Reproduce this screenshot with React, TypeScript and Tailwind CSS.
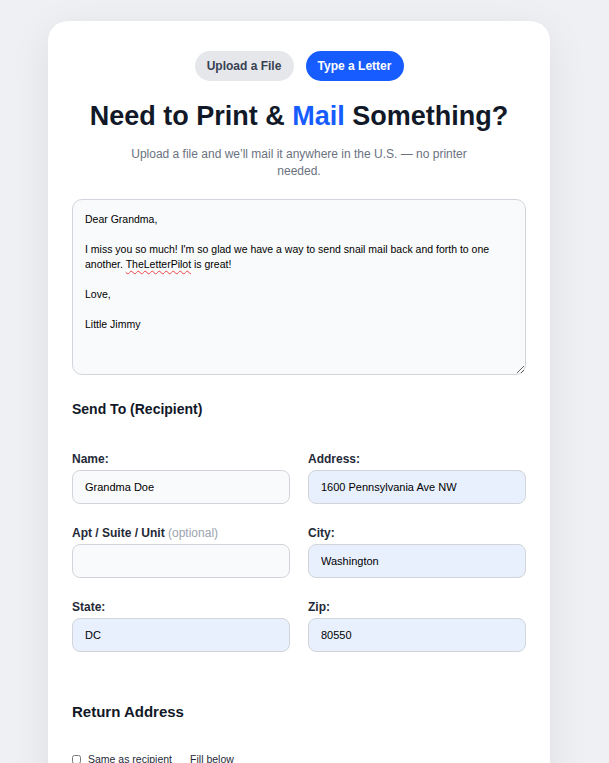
import { useState } from "react";

const font = { fontFamily: '"Liberation Sans", Arial, sans-serif' };

function Field({
  label,
  hint,
  value,
  filled = false,
}: {
  label: string;
  hint?: string;
  value?: string;
  filled?: boolean;
}) {
  return (
    <div className="flex flex-col">
      <label className="text-[12px] leading-[14px] font-bold text-[#1f2937]">
        {label}
        {hint && <span className="font-normal text-[#9ca3af]"> {hint}</span>}
      </label>
      <input
        defaultValue={value}
        className={`mt-[4px] h-[34px] w-full rounded-[8px] border border-[#d1d5db] px-3 text-[11px] text-black outline-none ${
          filled ? "bg-[#e8f0fe]" : "bg-[#f9fafb]"
        }`}
      />
    </div>
  );
}

export default function App() {
  const [mode, setMode] = useState<"upload" | "type">("type");
  const [same, setSame] = useState(false);

  return (
    <div
      className="min-h-screen bg-[#eef0f3] px-[48px] pt-[21px] pb-10"
      style={font}
    >
      <div className="w-[502px] rounded-[20px] bg-white px-6 pt-[30px] pb-10 shadow-[0_10px_40px_rgba(0,0,0,0.08)]">
        {/* mode switch */}
        <div className="flex justify-center gap-3">
          <button
            onClick={() => setMode("upload")}
            className={`h-[30px] w-[99px] rounded-full text-[12px] font-bold ${
              mode === "upload"
                ? "bg-[#175cff] text-white"
                : "bg-[#e5e7eb] text-[#374151]"
            }`}
          >
            Upload a File
          </button>
          <button
            onClick={() => setMode("type")}
            className={`h-[30px] w-[98px] rounded-full text-[12px] font-bold ${
              mode === "type"
                ? "bg-[#175cff] text-white"
                : "bg-[#e5e7eb] text-[#374151]"
            }`}
          >
            Type a Letter
          </button>
        </div>

        <h1 className="mt-[19px] text-center text-[27px] leading-[32px] font-bold text-[#111827]">
          Need to Print &amp; <span className="text-[#175cff]">Mail</span>{" "}
          Something?
        </h1>
        <p className="mx-auto mt-[14px] max-w-[360px] text-center text-[12px] leading-[17px] text-[#6b7280]">
          Upload a file and we’ll mail it anywhere in the U.S. — no printer
          needed.
        </p>

        {/* letter body */}
        <div className="mt-[19px] h-[176px] resize-y overflow-auto rounded-[10px] border border-[#d1d5db] bg-[#f9fafb] px-3 pt-[12px] text-[10.5px] leading-[15px] text-black">
          <p>Dear Grandma,</p>
          <p className="mt-[15px]">
            I miss you so much! I'm so glad we have a way to send snail mail
            back and forth to one another.{" "}
            <span className="underline decoration-wavy decoration-[#ef4444] decoration-1 underline-offset-2">
              TheLetterPilot
            </span>{" "}
            is great!
          </p>
          <p className="mt-[15px]">Love,</p>
          <p className="mt-[15px]">Little Jimmy</p>
        </div>

        <h2 className="mt-[26px] text-[14px] leading-[16px] font-bold text-[#111827]">
          Send To (Recipient)
        </h2>

        <div className="mt-[35px] grid grid-cols-2 gap-x-[18px] gap-y-[22px]">
          <Field label="Name:" value="Grandma Doe" />
          <Field label="Address:" value="1600 Pennsylvania Ave NW" filled />
          <Field label="Apt / Suite / Unit" hint="(optional)" />
          <Field label="City:" value="Washington" filled />
          <Field label="State:" value="DC" filled />
          <Field label="Zip:" value="80550" filled />
        </div>

        <h2 className="mt-[51px] text-[15px] leading-[17px] font-bold text-[#111827]">
          Return Address
        </h2>

        <div className="mt-[33px] flex items-center text-[10.5px] leading-[12px] text-[#1f2937]">
          <label className="flex items-center gap-[7px]">
            <input
              type="checkbox"
              checked={same}
              onChange={(e) => setSame(e.target.checked)}
              className="m-0 h-[9px] w-[9px]"
            />
            Same as recipient
          </label>
          <span className="ml-[18px]">Fill below</span>
        </div>
      </div>
    </div>
  );
}
